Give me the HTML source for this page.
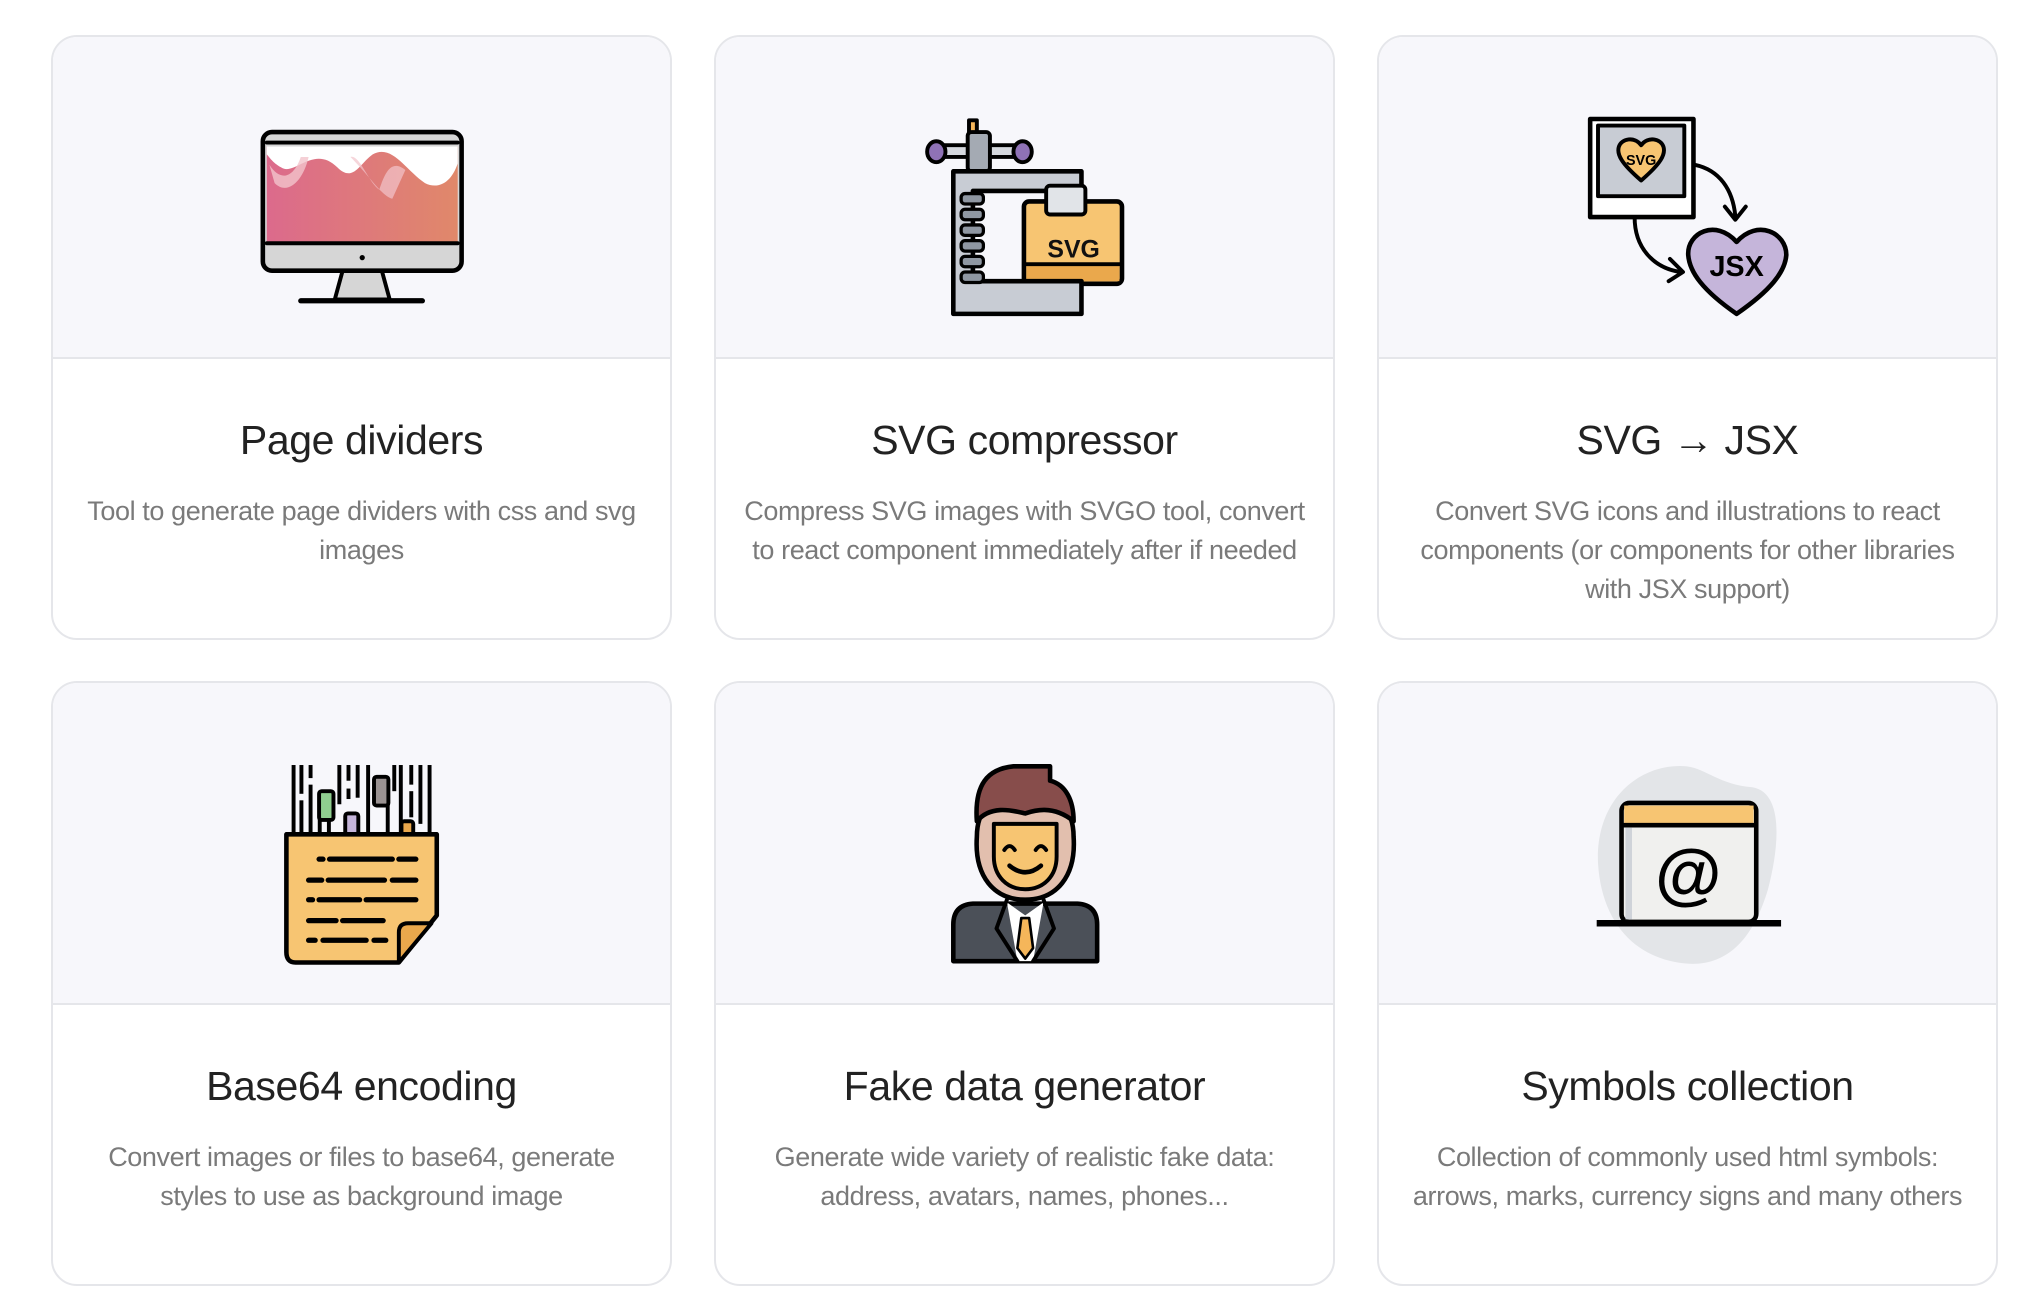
<!DOCTYPE html>
<html><head><meta charset="utf-8"><style>
html,body{margin:0;padding:0;background:#fff;width:2040px;height:1308px;overflow:hidden;font-family:"Liberation Sans",sans-serif}
.card{position:absolute;width:621px;height:605px;border:2px solid #e5e6ea;border-radius:26px;box-sizing:border-box;overflow:hidden;background:#fff}
.hd{height:320px;background:#f7f7fb;border-bottom:2px solid #e5e6ea}
.t{position:absolute;left:0;right:0;top:380px;text-align:center;font-size:41px;color:#222;letter-spacing:-0.4px}
.d{position:absolute;left:0;right:0;top:455px;text-align:center;font-size:27px;line-height:39px;color:#7a7a7a;letter-spacing:-0.4px}
svg.ov{position:absolute;left:0;top:0}
</style></head><body>
<div class="card" style="left:51px;top:35px"><div class="hd"></div><div class="t">Page dividers</div><div class="d">Tool to generate page dividers with css and svg<br>images</div></div>
<div class="card" style="left:714px;top:35px"><div class="hd"></div><div class="t">SVG compressor</div><div class="d">Compress SVG images with SVGO tool, convert<br>to react component immediately after if needed</div></div>
<div class="card" style="left:1377px;top:35px"><div class="hd"></div><div class="t">SVG → JSX</div><div class="d">Convert SVG icons and illustrations to react<br>components (or components for other libraries<br>with JSX support)</div></div>
<div class="card" style="left:51px;top:681px"><div class="hd"></div><div class="t">Base64 encoding</div><div class="d">Convert images or files to base64, generate<br>styles to use as background image</div></div>
<div class="card" style="left:714px;top:681px"><div class="hd"></div><div class="t">Fake data generator</div><div class="d">Generate wide variety of realistic fake data:<br>address, avatars, names, phones...</div></div>
<div class="card" style="left:1377px;top:681px"><div class="hd"></div><div class="t">Symbols collection</div><div class="d">Collection of commonly used html symbols:<br>arrows, marks, currency signs and many others</div></div>

<svg class="ov" width="2040" height="1308" viewBox="0 0 1560 1000.2" stroke-linejoin="round" stroke-linecap="round">
<defs><linearGradient id="g1" x1="0" x2="1"><stop offset="0" stop-color="#dc6a8c"/><stop offset="1" stop-color="#e0886a"/></linearGradient></defs>
<!-- monitor -->
<path d="M262 207 L292 207 L298 229 L256 229 Z" fill="#d6d6d6" stroke="#000" stroke-width="3"/>
<line x1="230" y1="230" x2="323" y2="230" stroke="#000" stroke-width="4"/>
<rect x="201" y="101" width="152" height="106" rx="7" fill="#d6d6d6" stroke="#000" stroke-width="3.5"/>
<rect x="204" y="112" width="146" height="74" fill="url(#g1)"/>
<path d="M204 112 H350 V125 C345 140 335 145 325 140 C310 130 300 110 285 118 C275 125 270 140 258 128 C240 110 225 135 215 128 C208 124 206 120 204 118 Z" fill="#fff"/>
<path d="M206 126 C215 140 225 135 230 120 L236 120 C232 138 220 150 210 140 Z" fill="#f2c4cc" opacity=".8"/>
<path d="M268 120 C275 118 282 140 290 145 C295 130 300 122 310 130 L300 152 C292 150 283 135 268 120Z" fill="#f2c4cc" opacity=".7"/>
<line x1="204" y1="109" x2="350" y2="109" stroke="#000" stroke-width="3"/>
<line x1="204" y1="186" x2="350" y2="186" stroke="#000" stroke-width="3"/>
<circle cx="277" cy="197" r="2" fill="#000"/>
<!-- clamp -->
<path d="M741 92 L747 92 L747 104 L741 104Z" fill="#f5b65a" stroke="#000" stroke-width="3"/>
<rect x="722" y="111" width="56" height="9" fill="#d5d8de" stroke="#000" stroke-width="3"/>
<ellipse cx="716" cy="116" rx="7" ry="8" fill="#8f72b6" stroke="#000" stroke-width="3"/>
<ellipse cx="782" cy="116" rx="7" ry="8" fill="#8f72b6" stroke="#000" stroke-width="3"/>
<rect x="740" y="101" width="17" height="30" rx="3" fill="#a4aab3" stroke="#000" stroke-width="3"/>
<rect x="783" y="154" width="75" height="63" rx="4" fill="#f7c572" stroke="#000" stroke-width="3.5"/>
<rect x="785" y="203" width="71" height="12" fill="#eaa84c"/>
<line x1="783" y1="202" x2="858" y2="202" stroke="#000" stroke-width="3"/>
<text x="821" y="197" text-anchor="middle" font-family="Liberation Sans" font-weight="bold" font-size="19" fill="#111">SVG</text>
<path d="M729 131 H827 V162 H812 V146 H744 V215 H827 V240 H729 Z" fill="#c8ccd4" stroke="#000" stroke-width="3.5"/>
<rect x="800" y="142" width="30" height="22" rx="3" fill="#e1e4e8" stroke="#000" stroke-width="3"/>
<g fill="#8f97a2" stroke="#000" stroke-width="2.5"><rect x="735" y="148" width="17" height="8" rx="3"/><rect x="735" y="160" width="17" height="8" rx="3"/><rect x="735" y="172" width="17" height="8" rx="3"/><rect x="735" y="184" width="17" height="8" rx="3"/><rect x="735" y="196" width="17" height="8" rx="3"/><rect x="735" y="208" width="17" height="8" rx="3"/></g>
<!-- svg->jsx -->
<rect x="1216" y="91" width="79" height="75" fill="#fff" stroke="#000" stroke-width="3.5"/>
<rect x="1222" y="96" width="66" height="54" fill="#c8ccd4" stroke="#000" stroke-width="3"/>
<path d="M1255 138 C1240 125 1236 118 1238 112 C1240 106 1250 104 1255 111 C1260 104 1270 106 1272 112 C1274 118 1270 125 1255 138Z" fill="#f7c572" stroke="#000" stroke-width="3"/>
<text x="1255" y="126" text-anchor="middle" font-family="Liberation Sans" font-weight="bold" font-size="11">SVG</text>
<path d="M1296 126 C1315 130 1325 145 1327 165" fill="none" stroke="#000" stroke-width="3"/>
<path d="M1319 158 L1327 168 L1335 158" fill="none" stroke="#000" stroke-width="3"/>
<path d="M1250 166 C1250 190 1265 205 1285 208" fill="none" stroke="#000" stroke-width="3"/>
<path d="M1277 198 L1287 208 L1276 215" fill="none" stroke="#000" stroke-width="3"/>
<path d="M1328 240 C1302 222 1292 208 1291 195 C1290 178 1312 167 1328 185 C1344 167 1366 178 1366 195 C1365 208 1354 222 1328 240Z" fill="#c5b5da" stroke="#000" stroke-width="3.5"/>
<text x="1328" y="211" text-anchor="middle" font-family="Liberation Sans" font-weight="bold" font-size="22">JSX</text>
<!-- base64 -->
<g fill="#000">
<rect x="223" y="585" width="3" height="52"/><rect x="229" y="585" width="3" height="22"/><rect x="229" y="612" width="3" height="25"/><rect x="236" y="585" width="3" height="10"/><rect x="236" y="600" width="3" height="37"/><rect x="258" y="585" width="3" height="30"/><rect x="265" y="585" width="3" height="12"/><rect x="265" y="603" width="3" height="8"/><rect x="272" y="585" width="3" height="25"/><rect x="280" y="585" width="3" height="52"/><rect x="300" y="585" width="3" height="20"/><rect x="305" y="585" width="3" height="52"/><rect x="313" y="585" width="3" height="15"/><rect x="313" y="605" width="3" height="20"/><rect x="320" y="585" width="3" height="45"/><rect x="327" y="585" width="3" height="52"/><rect x="243" y="620" width="3" height="17"/><rect x="250" y="628" width="3" height="9"/><rect x="295" y="615" width="3" height="22"/>
</g>
<rect x="244" y="605" width="11" height="22" rx="2" fill="#8fce8f" stroke="#000" stroke-width="3"/>
<rect x="286" y="594" width="11" height="22" rx="2" fill="#9a9292" stroke="#000" stroke-width="3"/>
<rect x="264" y="622" width="10" height="16" rx="2" fill="#c5b5da" stroke="#000" stroke-width="3"/>
<rect x="307" y="628" width="9" height="10" rx="2" fill="#eaa84c" stroke="#000" stroke-width="3"/>
<path d="M219 638 H334 V700 L305 736 H226 Q219 736 219 728 Z" fill="#f7c572" stroke="#000" stroke-width="3.5"/>
<path d="M305 736 V713 Q305 706 312 706 H330 Z" fill="#eaa84c" stroke="#000" stroke-width="3"/>
<g stroke="#000" stroke-width="4"><line x1="244" y1="657" x2="247" y2="657"/><line x1="252" y1="657" x2="300" y2="657"/><line x1="305" y1="657" x2="318" y2="657"/><line x1="236" y1="673" x2="246" y2="673"/><line x1="251" y1="673" x2="294" y2="673"/><line x1="300" y1="673" x2="318" y2="673"/><line x1="236" y1="688" x2="239" y2="688"/><line x1="244" y1="688" x2="275" y2="688"/><line x1="280" y1="688" x2="318" y2="688"/><line x1="236" y1="704" x2="257" y2="704"/><line x1="262" y1="704" x2="293" y2="704"/><line x1="236" y1="719" x2="241" y2="719"/><line x1="247" y1="719" x2="280" y2="719"/><line x1="286" y1="719" x2="295" y2="719"/></g>
<!-- person -->
<path d="M729 735 V707 Q729 692 744 691 H824 Q839 692 839 707 V735 Z" fill="#4b5058" stroke="#000" stroke-width="3.5"/>
<path d="M770 690 L784 700 L798 690 L790 735 H778Z" fill="#fff"/>
<path d="M781 702 L787 702 L790 725 L784 733 L778 725Z" fill="#f5b65a" stroke="#000" stroke-width="2"/>
<path d="M770 688 L762 710 L778 735 M798 688 L806 710 L790 735" fill="none" stroke="#000" stroke-width="3"/>
<path d="M747 640 C745 670 760 688 784 688 C808 688 823 670 821 640 C821 620 810 605 784 605 C758 605 747 620 747 640Z" fill="#e2bfae" stroke="#000" stroke-width="3.5"/>
<path d="M760 630 H808 V655 C808 670 798 680 784 680 C770 680 760 670 760 655Z" fill="#f7c572" stroke="#000" stroke-width="3"/>
<path d="M747 628 C745 600 755 588 775 586 H803 V597 C815 600 821 612 821 628 C805 615 790 620 784 622 C775 620 758 615 747 628Z" fill="#874d4b" stroke="#000" stroke-width="3.5"/>
<path d="M768 650 q4 -6 8 0 M792 650 q4 -6 8 0" fill="none" stroke="#000" stroke-width="3"/>
<path d="M772 662 q12 10 24 0" fill="none" stroke="#000" stroke-width="3.5"/>
<!-- symbols -->
<path d="M1290 586 C1305 588 1315 600 1340 602 C1365 606 1360 650 1352 680 C1340 720 1320 738 1292 737 C1255 735 1225 710 1222 660 C1220 610 1255 583 1290 586Z" fill="#e3e5e8"/>
<rect x="1240" y="614" width="103" height="91" rx="6" fill="#f0f0ee" stroke="#000" stroke-width="3.5"/>
<rect x="1242" y="616" width="99" height="14" fill="#f7c572"/>
<line x1="1241" y1="631" x2="1342" y2="631" stroke="#000" stroke-width="3.5"/>
<rect x="1243" y="633" width="5" height="70" fill="#cfd3d9"/>
<text x="1291" y="686" text-anchor="middle" font-family="Liberation Sans" font-weight="bold" font-size="52">@</text>
<line x1="1221" y1="706" x2="1362" y2="706" stroke="#000" stroke-width="5" stroke-linecap="butt"/>
</svg>
</body></html>
